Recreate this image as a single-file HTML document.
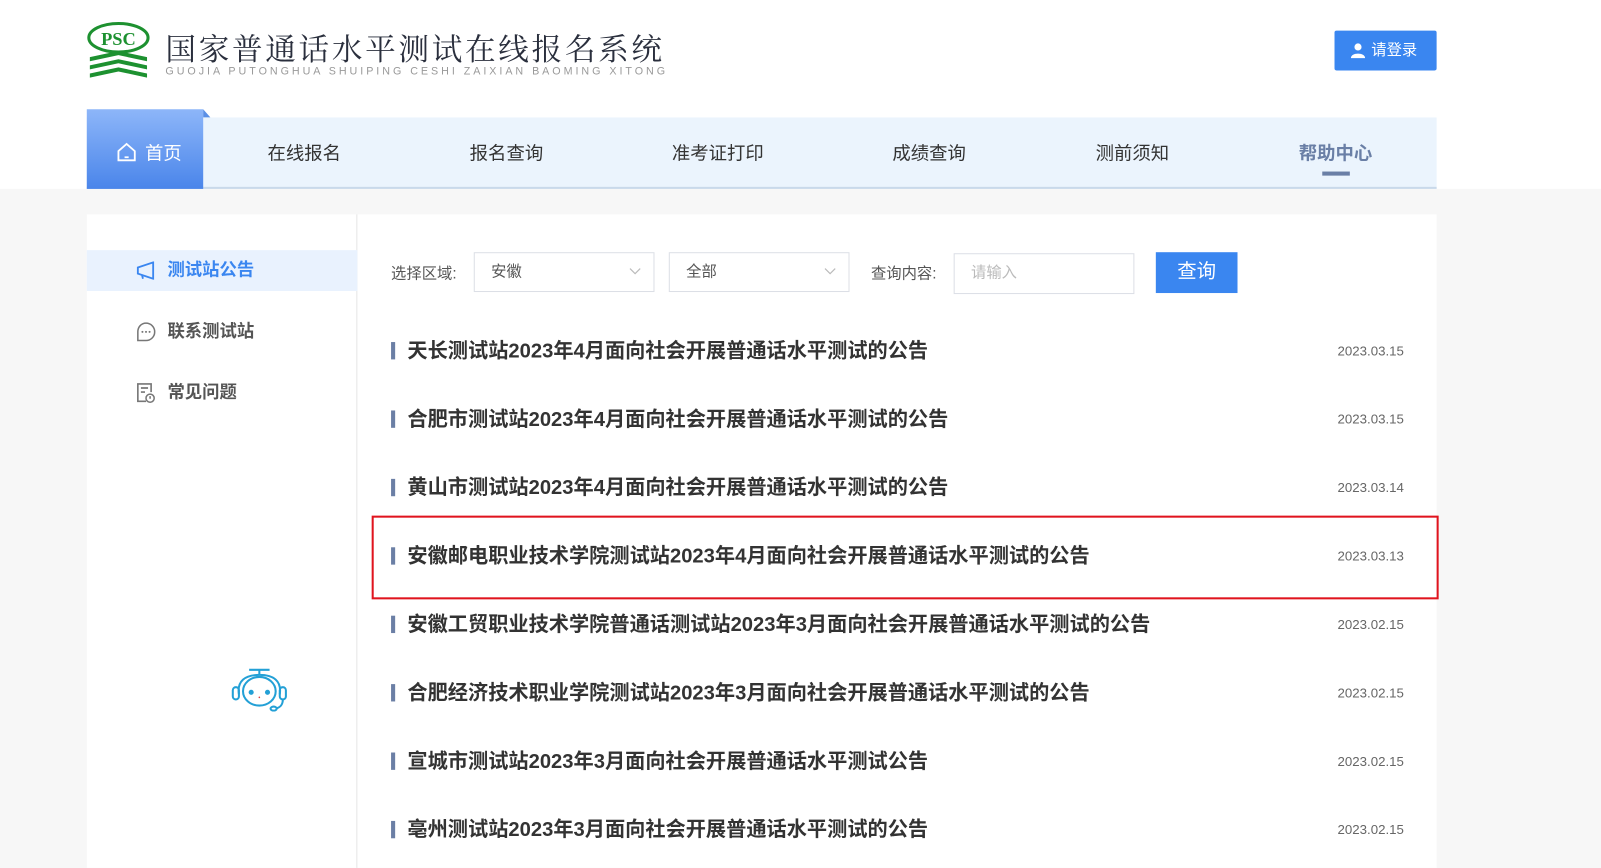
<!DOCTYPE html>
<html><head><meta charset="utf-8"><style>
*{margin:0;padding:0;box-sizing:border-box}
body{width:1601px;height:838px;overflow:hidden;background:#f7f7f7;font-family:"Liberation Sans","Noto Sans CJK SC",sans-serif;position:relative}
#w{position:absolute;left:0;top:0;width:1568px;height:821px;transform:scale(1.02105);transform-origin:0 0}
.top{position:absolute;left:0;top:0;width:1568px;height:185px;background:#fff}
.abs{position:absolute}
.nav{left:85px;top:115px;width:1322px;height:70px;background:#ebf4fd;border-bottom:2px solid #c9d9ea}
.nav span{position:absolute;top:21px;font-size:18px;color:#333}
.home{left:85px;top:107px;width:114px;height:78px;background:linear-gradient(#8db6f9,#4a85ea);color:#fff;font-size:18px}
.card{left:85px;top:210px;width:1322px;height:640px;background:#fff}
.side{left:85px;top:210px;width:265px;height:640px;border-right:1px solid #e6e6e6}
.si{position:absolute;left:0;width:265px;height:40px;font-size:17px;font-weight:bold;color:#555;line-height:40px;padding-left:79px}
.sel{position:absolute;top:247px;height:39px;border:1px solid #dcdfe6;font-size:15px;color:#555;line-height:37px;padding-left:16px}
.sel svg{position:absolute;right:12px;top:14px}
.item{position:absolute;left:383px;width:992px;height:24px}
.item b{position:absolute;left:0;top:3px;width:4px;height:17px;background:#6b7fa5}
.item i{position:absolute;left:16px;top:0;font-style:normal;font-weight:bold;font-size:19.8px;color:#333;line-height:24px}
.item em{position:absolute;right:0;top:4px;font-style:normal;font-size:13px;color:#666}
</style></head><body><div id="w">
<div class="top"></div>
<svg class="abs" style="left:85px;top:20px" width="62" height="60" viewBox="0 0 62 60">
<ellipse cx="31" cy="17" rx="29" ry="14" fill="#fff" stroke="#1d9130" stroke-width="3"/>
<text x="31" y="24" text-anchor="middle" font-family="Liberation Serif" font-weight="bold" font-size="18" fill="#1d9130">PSC</text>
<path d="M3 36 L31 30 L59 36 L59 40 L31 34 L3 40Z M3 44 L31 38 L59 44 L59 48 L31 42 L3 48Z M3 52 L31 46 L59 52 L59 56 L31 50 L3 56Z" fill="#1d9130"/>
</svg>
<div class="abs" style="left:162px;top:24px;font-size:30px;color:#2a2f3d;letter-spacing:2.6px;font-family:'Noto Serif CJK SC',serif">国家普通话水平测试在线报名系统</div>
<div class="abs" style="left:162px;top:64px;font-size:10.5px;color:#999;letter-spacing:2.9px">GUOJIA PUTONGHUA SHUIPING CESHI ZAIXIAN BAOMING XITONG</div>
<div class="abs" style="left:1307px;top:30px;width:100px;height:39px;background:#3a86f0;border-radius:2px;color:#fff;font-size:15px;line-height:39px;padding-left:36px">请登录
<svg class="abs" style="left:16px;top:12px" width="14" height="15" viewBox="0 0 14 15"><circle cx="7" cy="4" r="3.5" fill="#fff"/><path d="M0 15 C0 9 14 9 14 15Z" fill="#fff"/></svg></div>
<div class="abs nav">
<span style="left:177px">在线报名</span><span style="left:375px">报名查询</span><span style="left:573px">准考证打印</span><span style="left:789px">成绩查询</span><span style="left:988px">测前须知</span>
<span style="left:1187px;color:#6a7fa6;font-weight:bold">帮助中心</span>
<div class="abs" style="left:1210px;top:53px;width:27px;height:4px;background:#6a7fa6"></div>
</div>
<div class="abs home"><svg class="abs" style="left:29px;top:32px" width="20" height="20" viewBox="0 0 20 20"><path d="M2 9 L10 2 L18 9 V18 H2Z" fill="none" stroke="#fff" stroke-width="1.8"/><path d="M8 15 H12" stroke="#fff" stroke-width="1.8"/></svg><span class="abs" style="left:57px;top:29px">首页</span>
<div class="abs" style="left:114px;top:0;border-left:7px solid #5a8fe6;border-top:8px solid transparent;width:0;height:0"></div></div>
<div class="abs card"></div>
<div class="abs side"></div>
<div class="si" style="top:245px;left:85px;background:#e9f2fe;color:#3a86f0">测试站公告</div>
<svg class="abs" style="left:133px;top:256px" width="20" height="18" viewBox="0 0 20 18"><path d="M2 6 L17 1 V17 L2 12Z M6 13 L7 17" fill="none" stroke="#3a86f0" stroke-width="1.8"/></svg>
<div class="si" style="top:305px;left:85px">联系测试站</div>
<svg class="abs" style="left:133px;top:315px" width="20" height="20" viewBox="0 0 20 20"><path d="M10 1.5 C14.7 1.5 18.5 5.3 18.5 10 C18.5 14.7 14.7 18.5 10 18.5 H2 V10 C2 5.3 5.3 1.5 10 1.5Z" fill="none" stroke="#777" stroke-width="1.5"/><circle cx="6.5" cy="10" r="1" fill="#777"/><circle cx="10" cy="10" r="1" fill="#777"/><circle cx="13.5" cy="10" r="1" fill="#777"/></svg>
<div class="si" style="top:365px;left:85px">常见问题</div>
<svg class="abs" style="left:134px;top:375px" width="18" height="20" viewBox="0 0 18 20"><path d="M9 18 H1 V1 H14 V9 M4 5 H11 M4 9 H8" fill="none" stroke="#777" stroke-width="1.6"/><circle cx="13" cy="15" r="4" fill="none" stroke="#777" stroke-width="1.5"/><path d="M13 13 V15.5" stroke="#777" stroke-width="1.5"/></svg>
<svg class="abs" style="left:226px;top:653px" width="56" height="44" viewBox="0 0 56 44"><g fill="none" stroke="#23a0d6" stroke-width="2"><path d="M18 3 H38 M28 3 V8"/><ellipse cx="28" cy="24" rx="16" ry="14"/><path d="M8 27 C6 14 14 8 28 8 C42 8 50 14 48 27"/><rect x="2" y="20" width="6" height="12" rx="3"/><rect x="48" y="20" width="6" height="12" rx="3"/><path d="M51 32 C51 38 48 40 44 41"/><ellipse cx="42" cy="41" rx="3" ry="2"/></g><circle cx="20" cy="25" r="2.5" fill="#23a0d6"/><circle cx="36" cy="25" r="2.5" fill="#23a0d6"/><circle cx="28" cy="30" r="0.8" fill="#e04040"/></svg>
<div class="abs" style="left:383px;top:257px;font-size:15px;color:#555">选择区域:</div>
<div class="sel" style="left:464px;width:177px">安徽<svg width="12" height="8" viewBox="0 0 12 8"><path d="M1 1 L6 6 L11 1" fill="none" stroke="#bbb" stroke-width="1.2"/></svg></div>
<div class="sel" style="left:655px;width:177px">全部<svg width="12" height="8" viewBox="0 0 12 8"><path d="M1 1 L6 6 L11 1" fill="none" stroke="#bbb" stroke-width="1.2"/></svg></div>
<div class="abs" style="left:853px;top:257px;font-size:15px;color:#555">查询内容:</div>
<div class="sel" style="left:934px;top:248px;width:177px;height:40px;color:#bbb">请输入</div>
<div class="abs" style="left:1132px;top:247px;width:80px;height:40px;background:#3a86f0;color:#fff;font-size:19px;line-height:40px;text-align:center">查询</div>
<div class="item" style="top:332px"><b></b><i>天长测试站2023年4月面向社会开展普通话水平测试的公告</i><em>2023.03.15</em></div>
<div class="item" style="top:399px"><b></b><i>合肥市测试站2023年4月面向社会开展普通话水平测试的公告</i><em>2023.03.15</em></div>
<div class="item" style="top:466px"><b></b><i>黄山市测试站2023年4月面向社会开展普通话水平测试的公告</i><em>2023.03.14</em></div>
<div class="item" style="top:533px"><b></b><i>安徽邮电职业技术学院测试站2023年4月面向社会开展普通话水平测试的公告</i><em>2023.03.13</em></div>
<div class="item" style="top:600px"><b></b><i>安徽工贸职业技术学院普通话测试站2023年3月面向社会开展普通话水平测试的公告</i><em>2023.02.15</em></div>
<div class="item" style="top:667px"><b></b><i>合肥经济技术职业学院测试站2023年3月面向社会开展普通话水平测试的公告</i><em>2023.02.15</em></div>
<div class="item" style="top:734px"><b></b><i>宣城市测试站2023年3月面向社会开展普通话水平测试公告</i><em>2023.02.15</em></div>
<div class="item" style="top:801px"><b></b><i>亳州测试站2023年3月面向社会开展普通话水平测试的公告</i><em>2023.02.15</em></div>
<div class="abs" style="left:364px;top:505px;width:1045px;height:82px;border:2px solid #e0141e"></div>
</div></body></html>
